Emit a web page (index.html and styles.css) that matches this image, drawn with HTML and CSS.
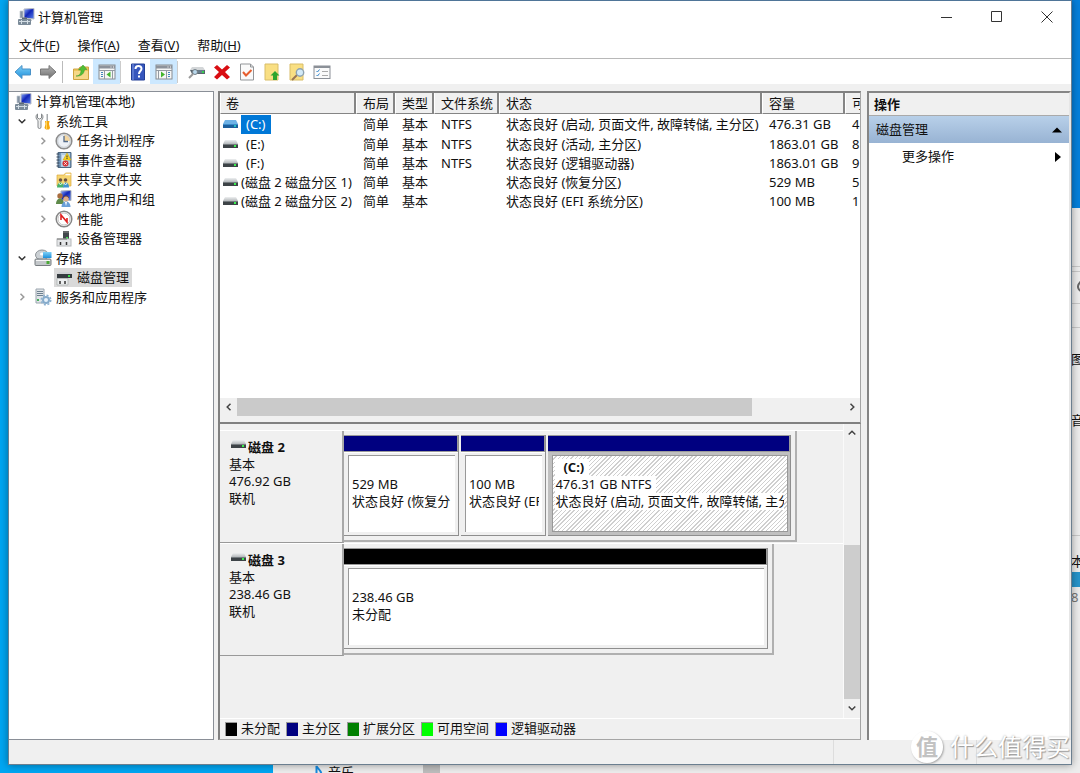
FILE: index.html
```html
<!DOCTYPE html>
<html lang="zh-CN">
<head>
<meta charset="utf-8">
<title>计算机管理</title>
<link rel="stylesheet" href="styles.css">
</head>
<body>
<svg class="defs" aria-hidden="true">
  <defs>
    <linearGradient id="screen" x1="0" y1="0" x2="1" y2="1"><stop offset="0" stop-color="#8fb2ff"/><stop offset=".45" stop-color="#1226b8"/><stop offset="1" stop-color="#5d86ee"/></linearGradient>
    <linearGradient id="sky" x1="0" y1="0" x2="0" y2="1"><stop offset="0" stop-color="#7fd0f7"/><stop offset="1" stop-color="#1c8fdc"/></linearGradient>
    <linearGradient id="steel" x1="0" y1="0" x2="0" y2="1"><stop offset="0" stop-color="#b5b5b5"/><stop offset="1" stop-color="#6f6f6f"/></linearGradient>
    <linearGradient id="lid" x1="0" y1="0" x2="0" y2="1"><stop offset="0" stop-color="#eef0f1"/><stop offset="1" stop-color="#b4b8bb"/></linearGradient>
    <symbol id="i-computer" viewBox="0 0 18 18">
      <path d="M7 1l10-.5V11l-10-1z" fill="url(#screen)" stroke="#b9bdc5"/>
      <path d="M3 3h3v7H3z" fill="#8492a3" stroke="#c0c8d0" stroke-width=".7"/>
      <path d="M11 11h3l1 2h-5z" fill="#b4b9c0"/>
      <path d="M5 9.500h5v2H5z" fill="#5d6a77"/><rect x="1" y="11" width="13" height="6" rx="1" fill="#7b8b99"/>
      <path d="M2 13.500h11M4.500 12v4M10.500 12v4" stroke="#d3dde4"/>
    </symbol>
    <symbol id="i-drive" viewBox="0 0 15 9">
      <path d="M2 0h11l2 4H0z" fill="url(#lid)"/><rect y="4" width="15" height="4" fill="#3d4347"/><path d="M0 4.500h15" stroke="#747a7e"/><rect x="11" y="5" width="2" height="2" fill="#3af04f"/>
    </symbol>
    <symbol id="i-drive-sel" viewBox="0 0 15 9">
      <path d="M2 0h11l2 4H0z" fill="#6eb2e6"/><rect y="4" width="15" height="4" fill="#1d5f9c"/><path d="M0 4.500h15" stroke="#3c8cca"/><rect x="11" y="5" width="2" height="2" fill="#22bfc0"/>
    </symbol>
    <symbol id="i-tools" viewBox="0 0 18 18">
      <path d="M3.500 2v4l2 1 2-1V2c2 1 2 5-.5 6.500V15a1.500 1.500 0 0 1-3 0V8.500C1.500 7 1.500 3 3.500 2z" fill="#eceded" stroke="#85898c"/>
      <path d="M12.500 2h1.500v7h-1.500z" fill="#a6a9ac"/><path d="M11 9h4.500l-.5 3 1 4-1 1.500h-3L10.500 16l1-4z" fill="#f5a80d"/><path d="M12.500 9v8" stroke="#ffd65b"/>
    </symbol>
    <symbol id="i-clock" viewBox="0 0 18 18">
      <circle cx="9" cy="9" r="7.800" fill="#edf1f6" stroke="#8d8d8d" stroke-width="1.600"/><path d="M9 2.500A6.500 6.500 0 0 1 15.500 9H9z" fill="#f4d6a0"/><circle cx="9" cy="9" r="6.300" fill="none" stroke="#c8cdd2"/><path d="M9 4v5.500h4" fill="none" stroke="#536b8a" stroke-width="1.300"/>
    </symbol>
    <symbol id="i-event" viewBox="0 0 18 18">
      <path d="M3 1.500h13v15H3z" fill="#7598bb" stroke="#4d6780"/><path d="M6 2v14h9V2z" fill="#afcbe3"/><path d="M7 5h5M7 7h4M7 9h3" stroke="#fff"/><path d="M1.500 3h3M1.500 6h3M1.500 9h3M1.500 12h3M1.500 15h3" stroke="#37475a"/><path d="M12 2l4 7H8z" fill="#f8d323" stroke="#caa000" stroke-width=".5"/><path d="M12 4.500v2M12 7v1" stroke="#333"/><circle cx="10.500" cy="12.500" r="3" fill="#d63236"/><path d="M9.300 11.300l2.400 2.400m0-2.400l-2.400 2.400" stroke="#fff"/>
    </symbol>
    <symbol id="i-share" viewBox="0 0 18 18">
      <path d="M2 4h7l1.500-2H16v13H2z" fill="#f6d571" stroke="#dcaa3d" stroke-width=".7"/><path d="M10.500 3.500h5" stroke="#fff" stroke-width="1.500"/><circle cx="5.500" cy="9" r="1.800" fill="#6b5444"/><circle cx="10.500" cy="9" r="1.800" fill="#6b5444"/><path d="M2 16.500c0-3 1.500-5 3.500-5s3 2 3 5z" fill="#46b16b"/><path d="M8 16.500c0-3 1-5 2.500-5 2.500 0 3.500 2 3.500 5z" fill="#3f94ce"/><path d="M4 12l1.500 2L7 12M9 12l1.500 2 1.500-2" fill="none" stroke="#e6f3ec"/>
    </symbol>
    <symbol id="i-users" viewBox="0 0 18 18">
      <path d="M6 1l10-.5v10L6 10z" fill="url(#screen)" stroke="#aab1ba"/><circle cx="5" cy="6" r="2.700" fill="#a96d3f"/><path d="M1 14c0-3 1.500-5.500 4-5.500S9 11 9 14z" fill="#5f8a4a"/><circle cx="11" cy="9" r="2.700" fill="#e2b088"/><path d="M8.500 8c.5-3 5-2.500 5 0" stroke="#785030" fill="none"/><path d="M6.500 17c0-3 1.500-5.500 4.500-5.500S15.500 14 15.500 17z" fill="#6a9fd8"/><path d="M10 12l1 4 1-4" fill="#fff"/>
    </symbol>
    <symbol id="i-perf" viewBox="0 0 18 18">
      <circle cx="9" cy="9" r="7.800" fill="#fff" stroke="#858585" stroke-width="1.500"/><circle cx="9" cy="9" r="6" fill="none" stroke="#c4c4c4"/><path d="M6 10V5l6 7V8" fill="none" stroke="#e02020" stroke-width="1.600"/>
    </symbol>
    <symbol id="i-device" viewBox="0 0 18 18">
      <rect x="8" y="1" width="6" height="10" fill="#41474b"/><path d="M8 2h6" stroke="#888"/><rect x="11" y="7" width="2" height="2" fill="#3ddd54"/><rect x="2" y="9" width="14" height="7" fill="#e4e6e8" stroke="#b5b8ba"/><path d="M2 9h10" stroke="#777"/><path d="M5.500 12v3M11.500 12v3" stroke="#333" stroke-width="1.500"/>
    </symbol>
    <symbol id="i-storage" viewBox="0 0 18 18">
      <ellipse cx="8" cy="6" rx="6.500" ry="5" fill="#cbd0d4" stroke="#8e9498"/><ellipse cx="8" cy="5" rx="2" ry="1.500" fill="#fff"/><rect x="9" y="3" width="8.500" height="6" fill="url(#sky)"/><rect x="1" y="10" width="16" height="6.500" rx="1" fill="#c3c7ca" stroke="#777c80"/><path d="M2 11.500h14" stroke="#f6f6f6"/><rect x="12.500" y="12" width="3" height="3" fill="#4ba936"/>
    </symbol>
    <symbol id="i-disk" viewBox="0 0 18 18">
      <path d="M4 3h11l2 2H2z" fill="#cfd2d4"/><path d="M2 5h15v4H2z" fill="#363c40"/><rect x="13" y="6" width="2" height="2" fill="#3cdd4b"/><path d="M2 9.500h11V16H2z" fill="#eceeef" stroke="#a8acae" stroke-width=".7"/><path d="M5 12v3M10 12v3" stroke="#333" stroke-width="1.500"/>
    </symbol>
    <symbol id="i-service" viewBox="0 0 18 18">
      <path d="M2 1h8v14H2z" fill="#e0e5e9" stroke="#9ba5ae"/><path d="M3 3.500h6M3 5.500h6M3 7.500h6" stroke="#6d808f"/><rect x="3" y="11" width="2" height="2" fill="#46b05a"/><circle cx="12" cy="12" r="3" fill="#e7f2fb" stroke="#86abcb" stroke-width="2"/><circle cx="12" cy="12" r="4.800" fill="none" stroke="#8bb1d1" stroke-width="1.400" stroke-dasharray="2 1.770"/>
    </symbol>
    <symbol id="i-back" viewBox="0 0 18 18"><path d="M1 9l7-6.500V6h8.500v6H8v3.500z" fill="url(#sky)" stroke="#4a92c8"/></symbol>
    <symbol id="i-forward" viewBox="0 0 18 18"><path d="M17 9l-7-6.500V6H1.500v6H10v3.500z" fill="url(#steel)" stroke="#777"/></symbol>
    <symbol id="i-up" viewBox="0 0 18 18"><path d="M1.500 6h5l1.500-2h8.500v12.500h-15z" fill="#eec45d" stroke="#cfa442"/><path d="M2 8h14v8H2z" fill="#f6d888"/><path d="M4 13c3 0 5-2 5-6H6.500L11 2l4 4.500h-2.500C12 11 9 13.500 4 13z" fill="#51bd35" stroke="#30952a" stroke-width=".5"/></symbol>
    <symbol id="i-pane-left" viewBox="0 0 18 18"><rect x="1" y="2" width="16" height="14" fill="#f5f6f6" stroke="#868b92"/><path d="M1 4h16" stroke="#8c929b" stroke-width="3"/><path d="M12.500 4h1M15 4h1" stroke="#fff"/><path d="M1 7.500h16M6.500 8v8M14.500 8v8" stroke="#949aa2"/><path d="M3 9.500h2M3 11.500h2M3 13.500h2" stroke="#4385bd"/><path d="M12.500 8.500v6l-4-3z" fill="#43b52c"/></symbol>
    <symbol id="i-pane-right" viewBox="0 0 18 18"><rect x="1" y="2" width="16" height="14" fill="#f5f6f6" stroke="#868b92"/><path d="M1 4h16" stroke="#8c929b" stroke-width="3"/><path d="M12.500 4h1M15 4h1" stroke="#fff"/><path d="M1 7.500h16M3.500 8v8M11.500 8v8" stroke="#949aa2"/><path d="M13 9.500h2M13 11.500h2M13 13.500h2" stroke="#4385bd"/><path d="M6 8.500v6l4-3z" fill="#43b52c"/></symbol>
    <symbol id="i-help" viewBox="0 0 18 18"><path d="M2.500 1h13v16h-13z" fill="#3656bd" stroke="#233f96"/><path d="M4 1v16" stroke="#7e98e3"/><path d="M6.500 6c0-4 6-4 6-.3 0 2.300-2.500 2.300-2.500 5.300" fill="none" stroke="#fff" stroke-width="2"/><rect x="9" y="12.500" width="2" height="2" fill="#fff"/></symbol>
    <symbol id="i-connect" viewBox="0 0 18 18"><path d="M4 4h11l2 3H2z" fill="#d3d6d8"/><path d="M2 7h15v4H4z" fill="#59656d"/><path d="M10 7h6v3h-6z" fill="#697d8b"/><rect x="14" y="8" width="2" height="2" fill="#36ce51"/><circle cx="7" cy="9" r="2.500" fill="#b9d9ed" stroke="#78838b"/><path d="M5 11l-4 4" stroke="#999" stroke-width="2"/></symbol>
    <symbol id="i-delete" viewBox="0 0 18 18"><path d="M4 2l5 4.500L14 2l3 2.500L12 9l5 5-3 2.500L9 12l-5 4.500L1 14l5-5-5-4.500z" fill="#d90d12"/></symbol>
    <symbol id="i-check" viewBox="0 0 18 18"><path d="M2.500 1h10l3 3v13h-13z" fill="#fafafa" stroke="#929598"/><path d="M12.500 1v3h3" fill="none" stroke="#929598"/><path d="M5 9l3 3.500L13.500 7" fill="none" stroke="#e65d2e" stroke-width="2"/></symbol>
    <symbol id="i-doc-up" viewBox="0 0 18 18"><path d="M2 1h13v16H2z" fill="#f9df83" stroke="#d8bd69"/><path d="M12 8l4.500 4.500h-2.500V17h-4v-4.500H7.500z" fill="#2ca52d"/></symbol>
    <symbol id="i-doc-find" viewBox="0 0 18 18"><path d="M2 1h13v16H2z" fill="#f9df83" stroke="#d8bd69"/><path d="M9 12l-5 5" stroke="#9a7553" stroke-width="2"/><circle cx="12" cy="9.500" r="3.700" fill="#d3eaf7" stroke="#8ea2b0" stroke-width="1.400"/></symbol>
    <symbol id="i-list" viewBox="0 0 18 18"><rect x="1" y="3" width="16" height="12.500" fill="#fafafa" stroke="#8b9097"/><path d="M1 4h16" stroke="#8b9097" stroke-width="2"/><path d="M3.500 8l1 1 2-2.500M3.500 12l1 1 2-2.500" fill="none" stroke="#3385cb"/><path d="M9 8.500h6M9 12.500h6" stroke="#aaa"/></symbol>
    <symbol id="i-refresh" viewBox="0 0 14 14"><path d="M11 3.500A5 5 0 1 0 12 7M3 2.500h4.500V7" fill="none" stroke="#666" stroke-width="2"/></symbol>
    <symbol id="i-chev" viewBox="0 0 8 8"><path d="M2.500.7L5.800 4 2.500 7.300" fill="none" stroke="currentColor" stroke-width="1.500"/></symbol>
  </defs>
</svg>

<div class="desktop">
  <div class="backdrop" aria-hidden="true">
    <span class="rule r1"></span><span class="rule r2"></span><span class="rule r3"></span><span class="rule r4"></span><span class="rule r5"></span>
    <svg class="refresh"><use href="#i-refresh"/></svg><span class="peek p2">图</span><span class="peek p3">音</span><span class="peek p4">本</span><span class="usage"></span><span class="peek p5">8</span>
    <svg class="note" viewBox="0 0 8 12"><path d="M1.500 12V1c1 3 5 4 5 9" fill="none" stroke="#178be0" stroke-width="2"/></svg>
    <span class="music">音乐</span><span class="grip"></span>
  </div>

  <main class="window">
    <header class="titlebar">
      <svg class="icon"><use href="#i-computer"/></svg>
      <h1 class="title">计算机管理</h1>
      <button class="caption" aria-label="最小化"><svg viewBox="0 0 12 12"><path d="M0 6.500h11" /></svg></button>
      <button class="caption" aria-label="最大化"><svg viewBox="0 0 12 12"><path d="M.5.500h10v10H.5z"/></svg></button>
      <button class="caption" aria-label="关闭"><svg viewBox="0 0 12 12"><path d="M.5.500l11 11M11.500.500l-11 11"/></svg></button>
    </header>
    <nav class="menubar">
      <button>文件(<u>F</u>)</button><button>操作(<u>A</u>)</button><button>查看(<u>V</u>)</button><button>帮助(<u>H</u>)</button>
    </nav>
    <div class="toolbar">
      <button aria-label="后退"><svg class="icon"><use href="#i-back"/></svg></button>
      <button aria-label="前进"><svg class="icon"><use href="#i-forward"/></svg></button>
      <i class="sep wide"></i>
      <button aria-label="向上"><svg class="icon"><use href="#i-up"/></svg></button>
      <button class="on" aria-label="显示控制台树"><svg class="icon"><use href="#i-pane-left"/></svg></button>
      <i class="sep"></i>
      <button aria-label="帮助"><svg class="icon"><use href="#i-help"/></svg></button>
      <button class="on" aria-label="显示操作窗格"><svg class="icon"><use href="#i-pane-right"/></svg></button>
      <i class="sep end"></i>
      <button aria-label="连接"><svg class="icon"><use href="#i-connect"/></svg></button>
      <button aria-label="删除"><svg class="icon"><use href="#i-delete"/></svg></button>
      <button aria-label="属性"><svg class="icon"><use href="#i-check"/></svg></button>
      <button aria-label="打开"><svg class="icon"><use href="#i-doc-up"/></svg></button>
      <button aria-label="查找"><svg class="icon"><use href="#i-doc-find"/></svg></button>
      <button aria-label="设置"><svg class="icon"><use href="#i-list"/></svg></button>
    </div>

    <div class="workspace">
      <section class="tree-pane">
        <ul class="tree">
          <li class="root"><svg class="icon"><use href="#i-computer"/></svg><span>计算机管理(本地)</span></li>
          <li class="l1"><svg class="chev open"><use href="#i-chev"/></svg><svg class="icon"><use href="#i-tools"/></svg><span>系统工具</span></li>
          <li class="l2"><svg class="chev"><use href="#i-chev"/></svg><svg class="icon"><use href="#i-clock"/></svg><span>任务计划程序</span></li>
          <li class="l2"><svg class="chev"><use href="#i-chev"/></svg><svg class="icon"><use href="#i-event"/></svg><span>事件查看器</span></li>
          <li class="l2"><svg class="chev"><use href="#i-chev"/></svg><svg class="icon"><use href="#i-share"/></svg><span>共享文件夹</span></li>
          <li class="l2"><svg class="chev"><use href="#i-chev"/></svg><svg class="icon"><use href="#i-users"/></svg><span>本地用户和组</span></li>
          <li class="l2"><svg class="chev"><use href="#i-chev"/></svg><svg class="icon"><use href="#i-perf"/></svg><span>性能</span></li>
          <li class="l2 leaf"><svg class="icon"><use href="#i-device"/></svg><span>设备管理器</span></li>
          <li class="l1"><svg class="chev open"><use href="#i-chev"/></svg><svg class="icon"><use href="#i-storage"/></svg><span>存储</span></li>
          <li class="l2 leaf"><div class="picked"><svg class="icon"><use href="#i-disk"/></svg><span>磁盘管理</span></div></li>
          <li class="l1"><svg class="chev"><use href="#i-chev"/></svg><svg class="icon"><use href="#i-service"/></svg><span>服务和应用程序</span></li>
        </ul>
      </section>

      <div class="center">
        <section class="volumes">
          <div class="table-area">
            <table class="grid">
              <colgroup><col class="c-name"><col class="c-layout"><col class="c-type"><col class="c-fs"><col class="c-state"><col class="c-size"><col class="c-free"></colgroup>
              <thead><tr><th>卷</th><th>布局</th><th>类型</th><th>文件系统</th><th>状态</th><th>容量</th><th>可</th></tr></thead>
              <tbody>
                <tr><td><div class="vol"><svg class="drive"><use href="#i-drive-sel"/></svg><span class="letter current">(C:)</span></div></td><td>简单</td><td>基本</td><td>NTFS</td><td>状态良好 (启动, 页面文件, 故障转储, 主分区)</td><td>476.31 GB</td><td>4</td></tr>
                <tr><td><div class="vol"><svg class="drive"><use href="#i-drive"/></svg><span class="letter">(E:)</span></div></td><td>简单</td><td>基本</td><td>NTFS</td><td>状态良好 (活动, 主分区)</td><td>1863.01 GB</td><td>8</td></tr>
                <tr><td><div class="vol"><svg class="drive"><use href="#i-drive"/></svg><span class="letter">(F:)</span></div></td><td>简单</td><td>基本</td><td>NTFS</td><td>状态良好 (逻辑驱动器)</td><td>1863.01 GB</td><td>9</td></tr>
                <tr><td><div class="vol"><svg class="drive"><use href="#i-drive"/></svg><span>(磁盘 2 磁盘分区 1)</span></div></td><td>简单</td><td>基本</td><td></td><td>状态良好 (恢复分区)</td><td>529 MB</td><td>5</td></tr>
                <tr><td><div class="vol"><svg class="drive"><use href="#i-drive"/></svg><span>(磁盘 2 磁盘分区 2)</span></div></td><td>简单</td><td>基本</td><td></td><td>状态良好 (EFI 系统分区)</td><td>100 MB</td><td>1</td></tr>
              </tbody>
            </table>
          </div>
          <div class="hscroll"><button aria-label="向左滚动"><svg class="chev left"><use href="#i-chev"/></svg></button><div class="track"><div class="thumb"></div></div><button aria-label="向右滚动"><svg class="chev"><use href="#i-chev"/></svg></button></div>
        </section>

        <section class="disks">
          <div class="disk-area">
            <div class="disk-list">
              <article class="disk">
                <div class="disk-info"><h2><svg class="drive"><use href="#i-drive"/></svg>磁盘 2</h2><p>基本</p><p>476.92 GB</p><p>联机</p></div>
                <div class="map map-a">
                  <div class="part recovery"><div class="bar"></div><div class="body"><div class="face"><p></p><p>529 MB</p><p>状态良好 (恢复分</p></div></div></div>
                  <div class="part efi"><div class="bar"></div><div class="body"><div class="face"><p></p><p>100 MB</p><p>状态良好 (EF</p></div></div></div>
                  <div class="part system"><div class="bar"></div><div class="body"><div class="face hatch"><p class="name"><span>(C:)</span></p><p><span>476.31 GB NTFS</span></p><p><span>状态良好 (启动, 页面文件, 故障转储, 主分</span></p></div></div></div>
                </div>
              </article>
              <article class="disk">
                <div class="disk-info"><h2><svg class="drive"><use href="#i-drive"/></svg>磁盘 3</h2><p>基本</p><p>238.46 GB</p><p>联机</p></div>
                <div class="map map-b">
                  <div class="part free"><div class="bar"></div><div class="body"><div class="face"><p></p><p>238.46 GB</p><p>未分配</p></div></div></div>
                </div>
              </article>
            </div>
            <div class="vscroll"><button aria-label="向上滚动"><svg class="chev up"><use href="#i-chev"/></svg></button><div class="track"><div class="thumb"></div></div><button aria-label="向下滚动"><svg class="chev down"><use href="#i-chev"/></svg></button></div>
          </div>
          <ul class="legend">
            <li><i class="k-none"></i>未分配</li><li><i class="k-primary"></i>主分区</li><li><i class="k-ext"></i>扩展分区</li><li><i class="k-avail"></i>可用空间</li><li><i class="k-logical"></i>逻辑驱动器</li>
          </ul>
        </section>
      </div>

      <aside class="actions">
        <h2 class="actions-title">操作</h2>
        <button class="group">磁盘管理<svg viewBox="0 0 10 10"><path d="M0 7.500L5 2.500l5 5z"/></svg></button>
        <button class="more">更多操作<svg viewBox="0 0 10 10"><path d="M2 0l6 5-6 5z"/></svg></button>
      </aside>
    </div>
    <footer class="status"><span></span><span></span><span></span></footer>
  </main>

  <div class="watermark"><b>值</b><span>什么值得买</span></div>
</div>
</body>
</html>
```
FILE: styles.css
```css
* { box-sizing: border-box; }
body {
  margin: 0;
  font: 13px/17px "Noto Sans", "Noto Sans CJK SC", sans-serif;
  color: #111;
}
h1, h2, p, ul { margin: 0; padding: 0; font-size: 13px; font-weight: 400; list-style: none; }
button { border: 0; padding: 0; background: none; font: inherit; color: inherit; }
svg { display: block; flex: none; }
.defs { position: absolute; width: 0; height: 0; }
.icon { width: 18px; height: 18px; }
.drive { width: 15px; height: 9px; }
.chev { width: 8px; height: 8px; }
.chev.open, .chev.down { transform: rotate(90deg); }
.chev.up { transform: rotate(-90deg); }
.chev.left { transform: rotate(180deg); }

.desktop {
  position: relative;
  display: flex;
  min-height: 100vh;
  padding: 0 8px 8px 8px;
  overflow: hidden;
  background: linear-gradient(90deg, #00a6f2, #00a6f2 50%, #0580dc 90%);
}

/* window showing from behind */
.backdrop { position: absolute; left: 273px; right: 0; top: 208px; bottom: 0; background: #ededed; }
.backdrop > * { position: absolute; }
.rule { right: 0; width: 9px; height: 1px; background: #c9c9c9; }
.r1 { top: 58px; } .r2 { top: 63px; } .r3 { top: 95px; } .r4 { top: 119px; } .r5 { top: 327px; }
.peek { left: calc(100% - 9px); }
.p2 { top: 143px; } .p3 { top: 204px; } .p4 { top: 345px; } .p5 { top: 381px; color: #777; }
.refresh { left: calc(100% - 4px); top: 72px; width: 14px; height: 14px; }
.usage { right: 0; top: 364px; width: 9px; height: 15px; background: #2694cb; }
.note { left: 42px; bottom: -4px; width: 8px; height: 12px; }
.music { left: 55px; bottom: -8px; }
.grip { left: 150px; bottom: 0; width: 17px; height: 8px; background: #bdbdbd; }

.window {
  position: relative;
  flex: 1;
  min-width: 0;
  display: flex;
  flex-direction: column;
  background: #f0f0f0;
  border: 1px solid #6b7f90;
  border-top-color: #4f7598;
  box-shadow: 0 0 8px rgba(0, 0, 0, .4);
}
.titlebar { display: flex; align-items: center; height: 32px; padding: 0 1px 0 8px; gap: 3px; background: #fff; }
.title { flex: 1; }
.caption { width: 47px; height: 32px; display: grid; place-items: center; }
.caption svg { width: 12px; height: 12px; fill: none; stroke: #333; }
.menubar { display: flex; gap: 18px; height: 26px; padding: 0 10px; background: #fff; border-bottom: 1px solid #b8b8b8; }
.toolbar { display: flex; align-items: center; height: 25px; padding-left: 1px; background: #fff; }
.toolbar button { width: 25px; height: 25px; display: grid; place-items: center; }
.toolbar .on { width: 27px; background: #cce8ff; }
.sep { width: 5px; height: 22px; border-left: 1px solid #ccc; }
.sep.wide { width: 8px; border: 0; background: linear-gradient(90deg, transparent 2px, #bbb 2px, #bbb 3px, transparent 3px); }
.sep.end { width: 7px; }

.workspace { flex: 1; min-height: 0; display: grid; grid-template-columns: 205px minmax(0, 1fr) 204px; gap: 4px; padding: 7px 0 0; }
.tree-pane { background: #fff; border: 1px solid #8a8f97; border-left: 0; }
.tree { display: grid; grid-auto-rows: 1fr; height: 215px; }
.tree li { display: flex; align-items: center; gap: 4px; white-space: nowrap; }
.tree .root { padding-left: 5px; }
.tree .chev { color: #9a9a9a; margin-right: 4px; }
.tree .chev.open { color: #333; }
.l1 { padding-left: 9px; }
.l2 { padding-left: 30px; }
.tree .leaf { padding-left: 46px; }
.picked { display: flex; align-items: center; gap: 4px; height: 19px; padding: 0 3px 0 1px; margin-left: -1px; background: #d9d9d9; }

.center { display: grid; grid-template-rows: minmax(0, 332fr) minmax(0, 316fr); min-height: 0; margin-right: 2px; }
.volumes { display: flex; flex-direction: column; min-height: 0; padding-bottom: 6px; border: 2px solid #808080; border-right: 1px solid #a5a5a5; background: #f0f0f0; }
.table-area { flex: 1; min-height: 0; overflow: hidden; background: #fff; }
.grid { width: 100%; height: 118px; table-layout: fixed; border-collapse: separate; border-spacing: 0; }
.c-name { width: 136px; } .c-layout { width: 39px; } .c-type { width: 39px; } .c-fs { width: 65px; } .c-size { width: 83px; } .c-free { width: 15px; }
.grid th { height: 21px; padding: 0 0 0 6px; overflow: hidden; text-align: left; font-weight: 400; background: #f0f0f0; border-right: 2px solid #858585; border-bottom: 1px solid #858585; border-left: 1px solid #fff; white-space: nowrap; }
.grid th:first-child { padding-left: 5px; }
.grid th:last-child { border-right: 0; }
.grid td { padding: 0 0 0 7px; overflow: hidden; white-space: nowrap; }
.grid th:last-child, .grid td:last-child { text-overflow: clip; }
.grid td:first-child { padding-left: 3px; }
.vol { display: flex; align-items: center; gap: 3px; }
.letter { padding: 0 5px; }
.current { height: 19px; line-height: 19px; color: #fff; background: #0078d7; }
.hscroll { display: flex; height: 18px; color: #444; }
.hscroll button { width: 17px; display: grid; place-items: center; }
.track { flex: 1; display: flex; }
.hscroll .thumb { width: 85%; background: #cacaca; }

.disks { display: flex; flex-direction: column; min-height: 0; border: 1px solid #a5a5a5; border-left: 2px solid #808080; border-top: 0; }
.disk-area { flex: 1; display: flex; min-height: 0; }
.disk-list { flex: 1; min-width: 0; padding-top: 6px; overflow: hidden; }
.disk { display: flex; height: 113px; border-top: 1px solid #fff; }
.disk-info { width: 124px; flex: none; padding: 8px 9px; border-right: 2px solid #a8a8a8; border-bottom: 1px solid #999; }
.disk-info h2 { display: flex; align-items: center; gap: 2px; padding-left: 2px; font-weight: 700; }
.disk-info .drive { margin-bottom: 5px; }
.map { display: flex; gap: 2px; height: 111px; padding: 4px 4px 4px 0; border-right: 2px solid #b0b0b0; border-bottom: 2px solid #b0b0b0; }
.map-a { width: 91%; max-width: 453px; }
.map-b { width: 86%; max-width: 430px; }
.part { min-width: 0; display: flex; flex-direction: column; border-right: 1px solid #8e8e8e; border-bottom: 1px solid #8e8e8e; }
.recovery { flex: 116 1 0; }
.efi { flex: 86 1 0; }
.system { flex: 246 1 0; }
.free { flex: 1 1 0; }
.bar { flex: none; height: 17px; background: #000080; border: 1px solid #9a9a9a; border-left: 0; }
.free .bar { background: #000; }
.body { flex: 1; min-height: 0; padding: 2px 3px 3px 4px; border-top: 1px solid #fff; }
.system .body { padding: 2px 2px 3px 4px; background: #c0c0c0; border-top-color: #c0c0c0; }
.face { height: 100%; padding: 3px 3px 0; overflow: hidden; background: #fff; border-top: 1px solid #999; border-left: 1px solid #999; }
.face p { height: 17px; overflow: hidden; white-space: nowrap; }
.face.hatch { padding-left: 2px; background: repeating-linear-gradient(135deg, #fff 0 2px, #cfcfcf 2px 3px); border: 1px solid #999; }
.hatch span { display: inline-block; padding-right: 4px; background: #fff; }
.hatch .name span { padding: 0 5px 0 8px; font-weight: 700; }
.vscroll { width: 17px; flex: none; display: flex; flex-direction: column; color: #444; border-left: 1px solid #fafafa; }
.vscroll button { height: 19px; flex: none; display: grid; place-items: center; }
.vscroll .track { flex-direction: column; justify-content: flex-end; }
.vscroll .thumb { height: 60%; background: #cdcdcd; }
.legend { display: flex; align-items: center; gap: 6px; height: 21px; padding-left: 5px; border-top: 1px solid #fff; white-space: nowrap; }
.legend li { display: flex; align-items: center; gap: 4px; }
.legend i { width: 12px; height: 14px; border: 1px solid #999; border-right: 0; border-bottom: 0; }
.k-none { background: #000; } .k-primary { background: #000080; } .k-ext { background: #008000; } .k-avail { background: #0f0; } .k-logical { background: #00f; }

.actions { background: #fff; border-left: 2px solid #858585; border-top: 2px solid #858585; border-right: 2px solid #e6e6e6; }
.actions-title { padding: 2px 5px; height: 23px; line-height: 19px; font-weight: 700; background: #f0f0f0; border-bottom: 1px solid #aaa; }
.group, .more { display: flex; align-items: center; justify-content: space-between; width: 100%; height: 27px; padding: 0 7px; }
.group { background: linear-gradient(#b8d0e9, #98b3d3); }
.more { padding: 0 6px 0 33px; }
.actions svg { width: 10px; height: 10px; }

.status { display: grid; grid-template-columns: 1fr 143px 95px; height: 24px; }
.status span + span { border-left: 1px solid #ddd; }
.watermark { position: absolute; right: 10px; bottom: 9px; display: flex; align-items: center; gap: 7px; font-size: 24px; line-height: 34px; color: #fff; text-shadow: 1px 1px 1px #999, 0 0 2px #aaa; }
.watermark b { width: 32px; height: 32px; border-radius: 16px; background: #fff; color: #c2c2c2; font-size: 22px; line-height: 30px; text-align: center; text-shadow: none; box-shadow: 1px 1px 2px #aaa; }
```
